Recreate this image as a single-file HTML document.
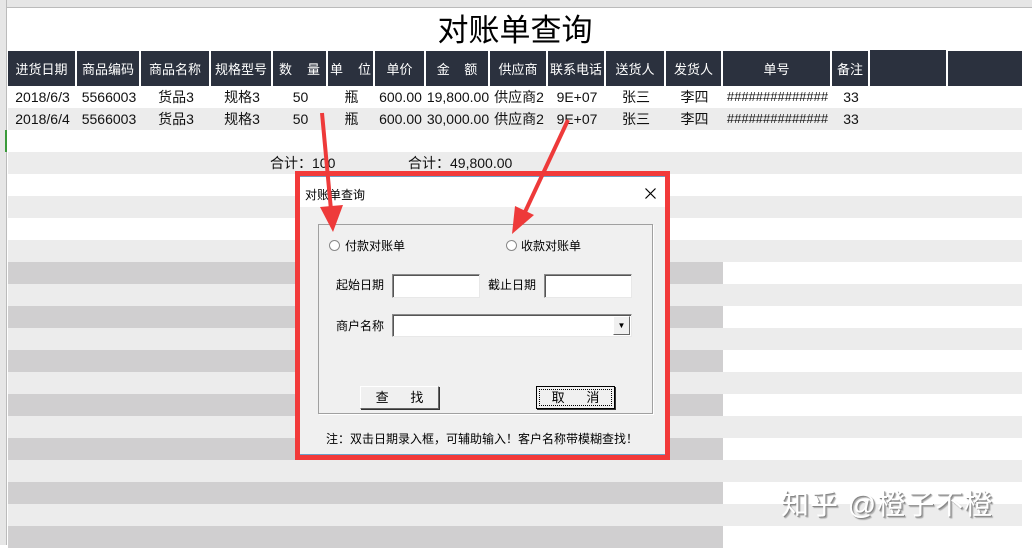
<!DOCTYPE html>
<html><head><meta charset="utf-8"><style>
*{margin:0;padding:0;box-sizing:border-box}
body{width:1032px;height:545px;overflow:hidden;background:#fff;position:relative;font-family:"Liberation Sans","Noto Sans CJK SC",sans-serif;font-size:13px;color:#111}
.a{position:absolute}
.row{position:absolute;left:8px;height:22px}
.hd{position:absolute;top:51px;height:35px;background:#2b313e;color:#fff;font-size:13px;display:flex;align-items:center;justify-content:center;border-right:2px solid #fff}
.c{position:absolute;font-size:14px;line-height:22px;text-align:center;white-space:nowrap}
.dlg{font-size:12px;color:#000}
.inp{position:absolute;background:#fff;border:1px solid;border-color:#8a8a8a #e8e8e8 #e8e8e8 #8a8a8a;box-shadow:inset 1px 1px 0 #555}
.btn{position:absolute;background:#f0f0f0;border:1px solid;border-color:#fff #666 #666 #fff;box-shadow:1px 1px 0 #333;text-align:center;line-height:21px;font-size:13px}
</style></head><body>
<div class="a" style="left:0;top:0;width:1032px;height:8px;background:#e6e6e6;border-bottom:1px solid #bbb"></div>
<div class="a" style="left:0;top:0;width:7px;height:545px;background:#e6e6e6;border-right:1px solid #bbb"></div>
<div class="a" style="left:0;top:130px;width:7px;height:22px;border-right:2px solid #3a9a3a"></div>
<div class="row" style="top:108px;width:1014px;background:#ececec"></div>
<div class="row" style="top:152px;width:1014px;background:#ececec"></div>
<div class="row" style="top:196px;width:1014px;background:#ececec"></div>
<div class="row" style="top:240px;width:1014px;background:#ececec"></div>
<div class="row" style="top:262px;width:715px;background:#d0cfd0"></div>
<div class="row" style="top:284px;width:1014px;background:#ececec"></div>
<div class="row" style="top:306px;width:715px;background:#d0cfd0"></div>
<div class="row" style="top:328px;width:1014px;background:#ececec"></div>
<div class="row" style="top:350px;width:715px;background:#d0cfd0"></div>
<div class="row" style="top:372px;width:1014px;background:#ececec"></div>
<div class="row" style="top:394px;width:715px;background:#d0cfd0"></div>
<div class="row" style="top:416px;width:1014px;background:#ececec"></div>
<div class="row" style="top:438px;width:715px;background:#d0cfd0"></div>
<div class="row" style="top:460px;width:1014px;background:#ececec"></div>
<div class="row" style="top:482px;width:715px;background:#d0cfd0"></div>
<div class="row" style="top:504px;width:1014px;background:#ececec"></div>
<div class="row" style="top:526px;width:715px;background:#d0cfd0"></div>
<div class="a" style="left:8px;top:8px;width:1014px;height:43px;text-align:center;font-size:31px;line-height:46px;color:#000">对账单查询</div>
<div class="hd" style="left:8px;width:69px">进货日期</div>
<div class="hd" style="left:77px;width:64px">商品编码</div>
<div class="hd" style="left:141px;width:70px">商品名称</div>
<div class="hd" style="left:211px;width:62px">规格型号</div>
<div class="hd" style="left:273px;width:55px;justify-content:space-between;padding:0 6px">数<span>量</span></div>
<div class="hd" style="left:328px;width:47px;justify-content:space-between;padding:0 2px">单<span>位</span></div>
<div class="hd" style="left:375px;width:51px">单价</div>
<div class="hd" style="left:426px;width:64px">金&nbsp;&nbsp;&nbsp;&nbsp;额</div>
<div class="hd" style="left:490px;width:58px">供应商</div>
<div class="hd" style="left:548px;width:58px">联系电话</div>
<div class="hd" style="left:606px;width:60px">送货人</div>
<div class="hd" style="left:666px;width:57px">发货人</div>
<div class="hd" style="left:723px;width:109px">单号</div>
<div class="hd" style="left:832px;width:38px">备注</div>
<div class="hd" style="left:870px;width:78px;top:50px;height:36px"></div>
<div class="hd" style="left:948px;width:74px;border-right:0"></div>
<div class="a" style="top:86px;left:0;width:1032px">
<div class="c" style="left:8px;width:69px">2018/6/3</div><div class="c" style="left:77px;width:64px">5566003</div><div class="c" style="left:141px;width:70px">货品3</div><div class="c" style="left:211px;width:62px">规格3</div><div class="c" style="left:273px;width:55px">50</div><div class="c" style="left:328px;width:47px">瓶</div><div class="c" style="left:375px;width:51px">600.00</div><div class="c" style="left:426px;width:64px">19,800.00</div><div class="c" style="left:490px;width:58px">供应商2</div><div class="c" style="left:548px;width:58px">9E+07</div><div class="c" style="left:606px;width:60px">张三</div><div class="c" style="left:666px;width:57px">李四</div><div class="c" style="left:723px;width:109px;font-size:13px">##############</div><div class="c" style="left:832px;width:38px">33</div></div>
<div class="a" style="top:108px;left:0;width:1032px">
<div class="c" style="left:8px;width:69px">2018/6/4</div><div class="c" style="left:77px;width:64px">5566003</div><div class="c" style="left:141px;width:70px">货品3</div><div class="c" style="left:211px;width:62px">规格3</div><div class="c" style="left:273px;width:55px">50</div><div class="c" style="left:328px;width:47px">瓶</div><div class="c" style="left:375px;width:51px">600.00</div><div class="c" style="left:426px;width:64px">30,000.00</div><div class="c" style="left:490px;width:58px">供应商2</div><div class="c" style="left:548px;width:58px">9E+07</div><div class="c" style="left:606px;width:60px">张三</div><div class="c" style="left:666px;width:57px">李四</div><div class="c" style="left:723px;width:109px;font-size:13px">##############</div><div class="c" style="left:832px;width:38px">33</div></div>
<div class="c" style="left:270px;top:152px;text-align:left">合计：100</div>
<div class="c" style="left:408px;top:152px;text-align:left">合计：49,800.00</div>
<div class="a" style="left:295px;top:171px;width:375px;height:289px;border:5px solid #f23a3a"></div>
<div class="a dlg" style="left:300px;top:176px;width:365px;height:279px;background:#f0f0f0;border-top:1px solid #6aa0c8;border-bottom:1px solid #6aa0c8">
 <div class="a" style="left:0;top:0;width:365px;height:30px;background:#fff"></div>
 <div class="a" style="left:5px;top:9px;font-size:12px">对账单查询</div>
 <svg class="a" style="left:345px;top:11px" width="11" height="11"><path d="M0.5 0.5L10.5 10.5M10.5 0.5L0.5 10.5" stroke="#000" stroke-width="1.2"/></svg>
 <div class="a" style="left:18px;top:47px;width:335px;height:190px;border:1px solid #a0a0a0;box-shadow:1px 1px 0 #fff"></div>
 <div class="a" style="left:29px;top:63px;width:11px;height:11px;border-radius:50%;background:#fff;border:1px solid #888"></div>
 <div class="a" style="left:45px;top:60px">付款对账单</div>
 <div class="a" style="left:206px;top:63px;width:11px;height:11px;border-radius:50%;background:#fff;border:1px solid #888"></div>
 <div class="a" style="left:221px;top:60px">收款对账单</div>
 <div class="a" style="left:36px;top:99px">起始日期</div>
 <div class="inp" style="left:92px;top:97px;width:88px;height:24px"></div>
 <div class="a" style="left:188px;top:99px">截止日期</div>
 <div class="inp" style="left:244px;top:97px;width:88px;height:24px"></div>
 <div class="a" style="left:36px;top:140px">商户名称</div>
 <div class="inp" style="left:92px;top:137px;width:240px;height:23px"></div>
 <div class="a" style="left:313px;top:139px;width:17px;height:19px;background:#f0f0f0;border:1px solid;border-color:#fff #666 #666 #fff;font-size:8px;text-align:center;line-height:18px">▼</div>
 <div class="btn" style="left:60px;top:209px;width:79px;height:23px">查&nbsp;&nbsp;&nbsp;&nbsp;&nbsp;&nbsp;找</div>
 <div class="btn" style="left:236px;top:209px;width:79px;height:23px;border:1px solid #000;outline:1px dotted #000;outline-offset:-4px">取&nbsp;&nbsp;&nbsp;&nbsp;&nbsp;&nbsp;消</div>
 <div class="a" style="left:26px;top:253px;font-size:12px">注：双击日期录入框，可辅助输入！客户名称带模糊查找！</div>
</div>
<svg class="a" style="left:0;top:0" width="1032" height="545">
<g fill="#ee3a3a" stroke="#ee3a3a">
<line x1="322" y1="113" x2="331" y2="210" stroke-width="4"/>
<polygon points="320,207 343,205 333,232" stroke="none"/>
<line x1="568" y1="120" x2="525" y2="212" stroke-width="4"/>
<polygon points="515,206 534,215 512,234" stroke="none"/>
</g>
</svg>
<div class="a" style="left:781px;top:483px;font-size:28px;color:#fff;text-shadow:1px 1px 0 #888,2px 2px 1px #aaa;letter-spacing:1px">知乎 @橙子不橙</div>
</body></html>
